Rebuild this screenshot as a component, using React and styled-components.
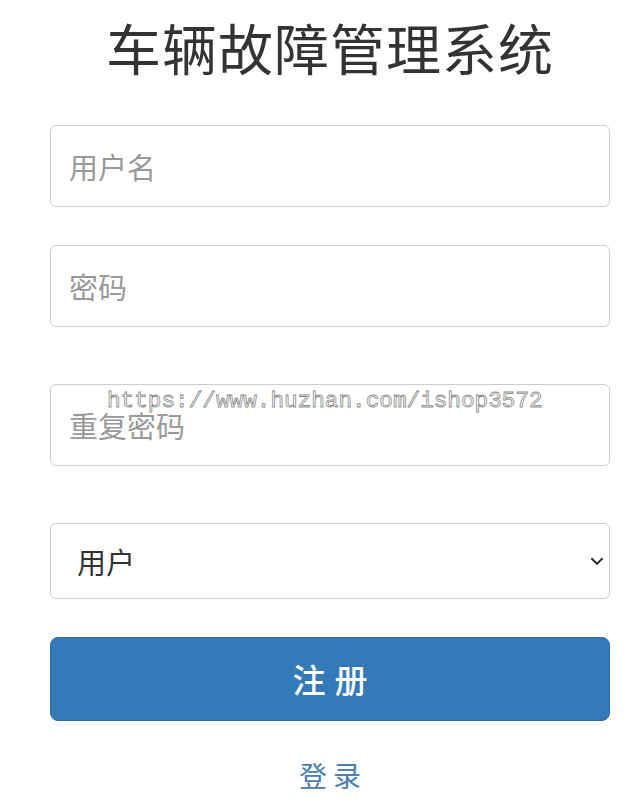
import React from "react"
import styled, { createGlobalStyle } from "styled-components"

const GlobalStyle = createGlobalStyle`
  html, body {
    margin: 0;
    padding: 0;
    background: #fff;
  }
  body {
    font-family: "Noto Sans CJK SC", "Noto Sans", sans-serif;
  }
`

//Styled Components
const Page = styled.div`
  position: relative;
  width: 641px;
  height: 802px;
  overflow: hidden;
`

const Form = styled.form`
  width: 560px;
  margin: 0 0 0 50px;
  padding: 8px 0 0;
  display: flex;
  flex-direction: column;
`

const Title = styled.h1`
  margin: 0 0 41px;
  font-size: 55px;
  font-weight: 400;
  line-height: 76px;
  color: #333;
  text-align: center;
  letter-spacing: 1px;
`

const Field = styled.input`
  box-sizing: border-box;
  width: 100%;
  height: ${props => props.h || 82}px;
  margin: 0 0 ${props => props.gap}px;
  padding: 0 18px;
  border: 1.5px solid #ccc;
  border-radius: 6px;
  font-family: inherit;
  font-size: 29px;
  color: #555;
  outline: none;
  &::placeholder {
    color: #999;
  }
`

const SelectWrap = styled.div`
  position: relative;
  margin: 0 0 38px;
`

const Select = styled.select`
  box-sizing: border-box;
  width: 100%;
  height: 76px;
  padding: 0 26px;
  border: 1.5px solid #ccc;
  border-radius: 6px;
  background: #fff;
  appearance: none;
  font-family: inherit;
  font-size: 29px;
  color: #333;
  outline: none;
`

const Chevron = styled.svg`
  position: absolute;
  right: 4px;
  top: 29px;
  width: 18px;
  height: 18px;
  pointer-events: none;
`

const Submit = styled.button`
  height: 84px;
  border: 1px solid #2e6da4;
  border-radius: 8px;
  background: #337ab7;
  color: #fff;
  font-family: inherit;
  font-size: 33px;
  font-weight: 500;
  letter-spacing: 9px;
  padding: 0 0 0 9px;
  cursor: pointer;
`

const LoginLink = styled.a`
  margin: 34px auto 0;
  font-size: 28px;
  letter-spacing: 6px;
  padding-left: 6px;
  color: #4a80b4;
  text-decoration: none;
`

const Watermark = styled.div`
  position: absolute;
  left: 107px;
  top: 388px;
  font-family: "Liberation Mono", "DejaVu Sans Mono", monospace;
  font-size: 22.7px;
  color: #fff;
  -webkit-text-stroke: 0.8px #8a8a8a;
  pointer-events: none;
  white-space: nowrap;
`

const App = () => {
  return (
    <Page>
      <GlobalStyle />
      <Form onSubmit={e => e.preventDefault()}>
        <Title>车辆故障管理系统</Title>
        <Field type="text" placeholder="用户名" gap={38} />
        <Field type="password" placeholder="密码" gap={57} />
        <Field type="password" placeholder="重复密码" gap={57} />
        <SelectWrap>
          <Select defaultValue="user">
            <option value="user">用户</option>
            <option value="admin">管理员</option>
          </Select>
          <Chevron viewBox="0 0 16 16">
            <path d="M3 5.5l5 5 5-5" fill="none" stroke="#333" strokeWidth="1.8" />
          </Chevron>
        </SelectWrap>
        <Submit type="submit">注册</Submit>
        <LoginLink href="#">登录</LoginLink>
      </Form>
      <Watermark>https://www.huzhan.com/ishop3572</Watermark>
    </Page>
  )
}

export default App
